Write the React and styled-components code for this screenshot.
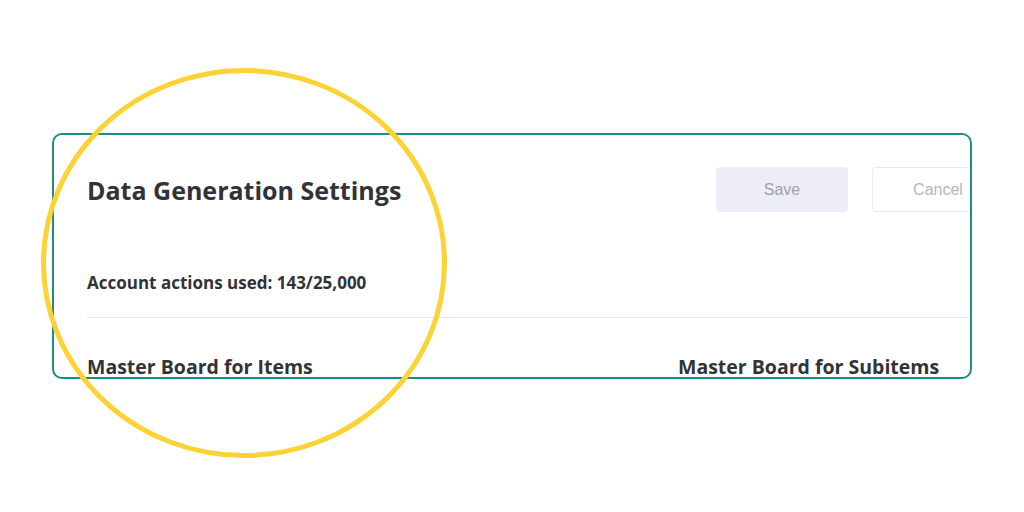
import styled, { createGlobalStyle } from "styled-components";

const GlobalStyle = createGlobalStyle`
    html, body {
        margin: 0;
        padding: 0;
        background: #ffffff;
    }
    * {
        box-sizing: border-box;
    }
`

const Page = styled.div`
    position: relative;
    width: 1024px;
    height: 512px;
    padding: 133px 0 0 52px;
    background: #ffffff;
    overflow: hidden;
`

const Card = styled.div`
    width: 920px;
    height: 246px;
    border: 2px solid #1f8c83;
    border-radius: 10px;
    background: #ffffff;
    overflow: hidden;
`

const Content = styled.div`
    width: 1000px;
    padding: 32px 0 0 33px;
    font-family: "Open Sans", "Noto Sans", sans-serif;
    color: #323338;
`

const Header = styled.div`
    display: flex;
    align-items: center;
    justify-content: space-between;
    width: 917px;
    height: 45px;
`

const Title = styled.h2`
    margin: 0;
    font-size: 25px;
    font-weight: 700;
    line-height: 32px;
`

const Actions = styled.div`
    display: flex;
    gap: 24px;
`

const Button = styled.button`
    width: 132px;
    height: 45px;
    border-radius: 4px;
    border: 1px solid ${(p) => (p.$primary ? "#ededf7" : "#ebebef")};
    background: ${(p) => (p.$primary ? "#ededf7" : "#ffffff")};
    color: ${(p) => (p.$primary ? "#a0a0aa" : "#b4b4bc")};
    font-family: "Liberation Sans", Arial, sans-serif;
    font-size: 16px;
    padding: 0;
`

const Usage = styled.p`
    margin: 60px 0 0;
    font-size: 17px;
    font-weight: 700;
    line-height: 22px;
`

const Divider = styled.hr`
    width: 917px;
    margin: 23px 0 0;
    border: none;
    border-top: 1px solid #dfe3ed;
`

const Boards = styled.div`
    display: grid;
    grid-template-columns: 591px 1fr;
    margin-top: 37px;
`

const BoardTitle = styled.h3`
    margin: 0;
    font-size: 19.5px;
    font-weight: 700;
    line-height: 24px;
`

const Highlight = styled.svg`
    position: absolute;
    left: 0;
    top: 0;
    pointer-events: none;
`

const App = () => {
    return(
        <>
            <GlobalStyle />
            <Page>
                <Card>
                    <Content>
                        <Header>
                            <Title>Data Generation Settings</Title>
                            <Actions>
                                <Button $primary>Save</Button>
                                <Button>Cancel</Button>
                            </Actions>
                        </Header>
                        <Usage>Account actions used: 143/25,000</Usage>
                        <Divider />
                        <Boards>
                            <BoardTitle>Master Board for Items</BoardTitle>
                            <BoardTitle>Master Board for Subitems</BoardTitle>
                        </Boards>
                    </Content>
                </Card>
                <Highlight width="1024" height="512" viewBox="0 0 1024 512">
                    <ellipse cx="244" cy="263" rx="200.5" ry="192.5" fill="none" stroke="#fdd235" strokeWidth="5" />
                </Highlight>
            </Page>
        </>
    )
}

export default App
